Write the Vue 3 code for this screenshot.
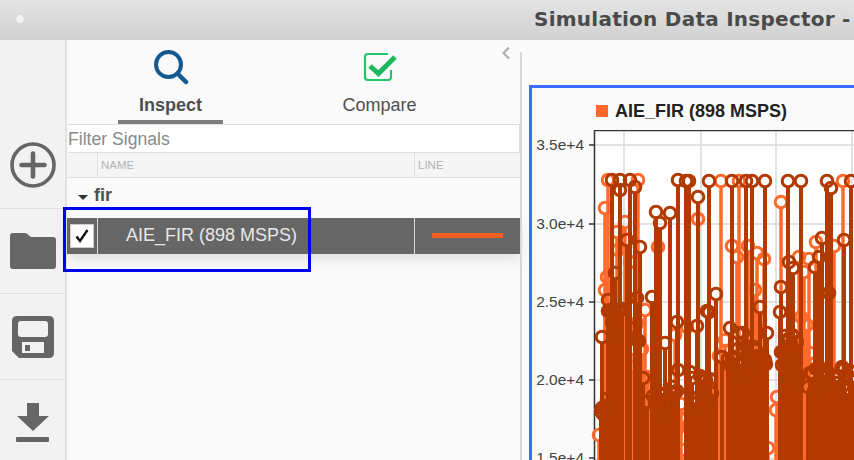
<template>
  <div class="window">
    <header class="titlebar">
      <span class="dot"></span>
      <span class="title">Simulation Data Inspector -</span>
    </header>
    <div class="body">
      <nav class="rail">
        <div class="rail-item first">
          <svg width="48" height="48" viewBox="0 0 48 48">
            <circle cx="24" cy="24" r="21" fill="none" stroke="#666" stroke-width="3.6" />
            <path d="M24 12.5v23M12.5 24h23" stroke="#666" stroke-width="4.6" stroke-linecap="round" />
          </svg>
        </div>
        <div class="rail-item second">
          <svg width="46" height="38" viewBox="0 0 46 38">
            <path d="M0 4q0-3 3-3h12q2 0 3 1.500l3 2.500h22q3 0 3 3v26q0 3-3 3H3q-3 0-3-3z" fill="#666" />
          </svg>
        </div>
        <div class="rail-item">
          <svg width="42" height="42" viewBox="0 0 42 42">
            <path fill-rule="evenodd" fill="#666" d="M5 0h32q5 0 5 5v32q0 5-5 5H7l-7-7V5q0-5 5-5zM9 5q-3 0-3 3v10q0 3 3 3h24q3 0 3-3V8q0-3-3-3zM10 26v11h22V26z" />
            <rect x="13" y="29" width="5" height="6" fill="#666" />
          </svg>
        </div>
        <div class="rail-item">
          <svg width="34" height="40" viewBox="0 0 34 40">
            <path d="M11 0h12v13h10L17 28 1 13h10z" fill="#666" />
            <rect x="0" y="34" width="33" height="5" rx="1" fill="#666" />
          </svg>
        </div>
      </nav>

      <section class="panel">
        <div class="tabs">
          <div class="tab active">
            <svg width="36" height="36" viewBox="0 0 36 36">
              <circle cx="15.500" cy="15.500" r="12.500" fill="none" stroke="#15598f" stroke-width="4" />
              <path d="M24.500 24.500l8.500 8.500" stroke="#15598f" stroke-width="4.500" stroke-linecap="round" />
            </svg>
            <span class="tab-label">Inspect</span>
          </div>
          <div class="tab">
            <svg width="36" height="36" viewBox="0 0 36 36">
              <path d="M26 5H6q-3 0-3 3v20q0 3 3 3h20q3 0 3-3v-7" fill="none" stroke="#22c567" stroke-width="2.200" />
              <path d="M8 17l8.500 7.500L33 8" fill="none" stroke="#1fb85f" stroke-width="5" />
            </svg>
            <span class="tab-label">Compare</span>
          </div>
          <svg class="collapse" width="10" height="14" viewBox="0 0 10 14">
            <path d="M8 1.500L2.500 7 8 12.500" fill="none" stroke="#aaa" stroke-width="2" />
          </svg>
        </div>
        <div class="filter">Filter Signals</div>
        <div class="head-row">
          <span class="cell-check"></span>
          <span class="cell-name">NAME</span>
          <span class="cell-line">LINE</span>
        </div>
        <div class="group"><span class="caret"></span>fir</div>
        <div class="signal-row">
          <span class="cell-check">
            <span class="checkbox">
              <svg width="16" height="16" viewBox="0 0 16 16">
                <path d="M2.500 8.500l3.500 4.500L13.500 2" fill="none" stroke="#111" stroke-width="2.400" />
              </svg>
            </span>
          </span>
          <span class="cell-name">AIE_FIR (898 MSPS)</span>
          <span class="cell-line"><i class="swatch"></i></span>
        </div>
        <div class="callout"></div>
      </section>

      <main class="view">
        <div class="chart-card">
          <div class="legend"><i class="legend-box"></i>AIE_FIR (898 MSPS)</div>
          <svg class="plot" width="325" height="330" viewBox="529 130 325 330">
            <rect x="594" y="130" width="260" height="330" fill="#fff" />
            <g stroke="#d9d9d9" stroke-width="1.500">
              <path v-for="y in gridY" :key="'h' + y" :d="`M594 ${y}H854`" />
              <path v-for="x in gridX" :key="'v' + x" :d="`M${x} 130V460`" />
            </g>
            <path d="M594.500 130V460M594 130.500H854" stroke="#333" stroke-width="1.500" fill="none" />
            <g v-for="t in ticks" :key="t.label">
              <path :d="`M589 ${t.y}H594`" stroke="#333" stroke-width="1.500" />
              <text x="584" :y="t.y + 5" text-anchor="end" class="tick">{{ t.label }}</text>
            </g>
            <g stroke="#ff6a2b" stroke-width="3.500" fill="none">
              <path v-for="(p, i) in lightStems" :key="'l' + i" :d="`M${p[0]} ${p[1] + 5}V460`" />
              <circle v-for="(p, i) in lightStems" :key="'lc' + i" :cx="p[0]" :cy="p[1]" r="5.800" stroke-width="3" />
            </g>
            <g stroke="#b23a00" stroke-width="4" fill="none">
              <path v-for="(p, i) in darkStems" :key="'d' + i" :d="`M${p[0]} ${p[1] + 5}V460`" />
              <circle v-for="(p, i) in darkStems" :key="'dc' + i" :cx="p[0]" :cy="p[1]" r="5.800" stroke-width="3" />
            </g>
          </svg>
        </div>
      </main>
    </div>
  </div>
</template>

<script setup>
const gridY = [145, 224, 302, 380, 459]
const gridX = [624, 701, 776, 852]
const ticks = [
  { label: '3.5e+4', y: 145 },
  { label: '3.0e+4', y: 224 },
  { label: '2.5e+4', y: 302 },
  { label: '2.0e+4', y: 380 },
  { label: '1.5e+4', y: 458 }
]

// read off the reference peaks
const lightPeaks = [
  [608, 180], [638, 180], [605, 208], [625, 222], [658, 247], [605, 290], [607, 277], [645, 310],
  [721, 181], [739, 181], [843, 181], [781, 202], [698, 219], [732, 246], [748, 246], [757, 253],
  [764, 259], [737, 257], [816, 242], [799, 257], [809, 259], [804, 272], [834, 246], [599, 435],
  [777, 397], [776, 410], [680, 418], [768, 448], [682, 450], [637, 323], [687, 327], [810, 353],
  [617, 232], [618, 250], [630, 262], [755, 290], [760, 320], [725, 340], [675, 335]
]
const darkPeaks = [
  [612, 180], [620, 180], [630, 180], [620, 190], [635, 187], [678, 180], [686, 181], [656, 212],
  [670, 213], [660, 223], [627, 240], [640, 247], [615, 273], [608, 300], [637, 298], [652, 297],
  [689, 181], [709, 181], [732, 181], [746, 181], [752, 181], [765, 181], [788, 181], [801, 181],
  [827, 181], [831, 188], [851, 181], [698, 197], [716, 294], [707, 311], [760, 307], [781, 287],
  [780, 312], [789, 262], [793, 268], [815, 267], [822, 238], [844, 240], [819, 257], [829, 293],
  [602, 337], [677, 322], [697, 326], [665, 343], [709, 312], [730, 328], [738, 333], [743, 333],
  [767, 333], [792, 335], [842, 367], [722, 357], [765, 360], [678, 370], [690, 372], [643, 378],
  [602, 408], [782, 365], [798, 380], [647, 402]
]

// dense part near the bottom, a fixed sequence so the picture stays the same
const darkBands = [
  [608, 623, 305], [601, 607, 395], [635, 640, 320], [653, 677, 385], [692, 712, 375],
  [728, 766, 345], [781, 797, 335], [808, 854, 365]
]
const lightBands = [
  [625, 634, 310], [642, 652, 330], [713, 727, 350], [798, 807, 310], [678, 682, 400]
]
let seed = 17
const next = () => {
  seed = (seed * 137 + 59) % 1009
  return seed / 1009
}
const fill = (bands, step, spread) => {
  const out = []
  bands.forEach(([from, to, top]) => {
    for (let x = from; x <= to; x += step) {
      out.push([x, top + Math.round(next() * spread)])
    }
  })
  return out
}
const lightStems = [...lightPeaks, ...fill(lightBands, 3, 60)]
const darkStems = [...darkPeaks, ...fill(darkBands, 2, 28)]
</script>

<style scoped>
.window {
  width: 854px;
  height: 460px;
  overflow: hidden;
  display: flex;
  flex-direction: column;
  background: #fafafa;
  font-family: "Liberation Sans", Arial, sans-serif;
}
.titlebar {
  flex: none;
  display: flex;
  align-items: center;
  padding: 0 0 2px 15px;
  height: 37px;
  border-bottom: 1px solid #d0d0d0;
  background: linear-gradient(#e4e4e4, #d2d2d2);
  white-space: nowrap;
}
.dot {
  flex: none;
  width: 10px;
  height: 10px;
  border-radius: 50%;
  background: #f2f2f2;
  border: 1px solid #d8d8d8;
  box-sizing: border-box;
}
.title {
  margin-left: 509px;
  font-family: "DejaVu Sans", sans-serif;
  font-weight: 700;
  font-size: 20px;
  letter-spacing: 0.25px;
  color: #4a4a4a;
}
.body {
  flex: 1;
  min-height: 0;
  display: flex;
}
.rail {
  flex: none;
  width: 65px;
  display: flex;
  flex-direction: column;
  background: #f2f2f2;
  border-right: 2px solid #e2e2e2;
}
.rail-item {
  flex: none;
  height: 85px;
  display: flex;
  align-items: center;
  justify-content: center;
  border-bottom: 1px solid #e0e0e0;
}
.rail-item.first {
  height: 169px;
  align-items: flex-end;
  padding-bottom: 19px;
  box-sizing: border-box;
}
.rail-item.second {
  height: 84px;
}
.panel {
  flex: none;
  width: 453px;
  position: relative;
  display: flex;
  flex-direction: column;
  padding-right: 2px;
  height: 420px;
}
.panel::after {
  content: "";
  position: absolute;
  right: 0;
  top: 12px;
  bottom: 0;
  width: 2px;
  background: #d8d8d8;
}
.tabs {
  flex: none;
  height: 84px;
  display: flex;
  position: relative;
  padding-left: 51px;
  box-sizing: border-box;
}
.tab {
  width: 105px;
  height: 84px;
  display: flex;
  flex-direction: column;
  align-items: center;
  padding-top: 9px;
  box-sizing: border-box;
  border-bottom: 4px solid transparent;
}
.tab + .tab {
  margin-left: 104px;
}
.tab.active {
  border-bottom-color: #7f7f7f;
}
.tab-label {
  margin-top: 10px;
  font-size: 18px;
  color: #4f4f4f;
}
.tab.active .tab-label {
  font-weight: 700;
}
.collapse {
  position: absolute;
  right: 9px;
  top: 6px;
}
.filter {
  flex: none;
  height: 29px;
  line-height: 28px;
  padding-left: 0;
  box-sizing: border-box;
  background: #fff;
  border: 1px solid #dedede;
  border-left: 0;
  margin-left: 1px;
  font-size: 17.600px;
  color: #8a8a8a;
}
.head-row {
  flex: none;
  height: 25px;
  display: flex;
  background: #f5f5f5;
  border-bottom: 1px solid #dedede;
  box-sizing: border-box;
  font-size: 11.500px;
  line-height: 24px;
  color: #b4b4b4;
}
.cell-check {
  flex: none;
  width: 31px;
  border-right: 1px solid #dedede;
  box-sizing: border-box;
  display: flex;
  align-items: center;
  justify-content: center;
}
.cell-name {
  flex: none;
  width: 317px;
  padding-left: 3px;
  box-sizing: border-box;
  border-right: 1px solid #dedede;
}
.cell-line {
  flex: 1;
  padding-left: 3px;
  box-sizing: border-box;
}
.group {
  flex: none;
  height: 40px;
  display: flex;
  align-items: center;
  padding-left: 11px;
  padding-bottom: 5px;
  box-sizing: border-box;
  font-size: 18px;
  font-weight: 700;
  color: #4f4f4f;
}
.caret {
  width: 0;
  height: 0;
  margin-right: 6px;
  margin-top: 3px;
  border-left: 5px solid transparent;
  border-right: 5px solid transparent;
  border-top: 5px solid #333;
}
.signal-row {
  flex: none;
  height: 36px;
  display: flex;
  background: #666;
  box-shadow: 0 6px 12px rgba(0, 0, 0, 0.1);
  font-size: 18px;
  line-height: 34px;
  color: #e8e8e8;
}
.signal-row .cell-check {
  border-right: 1px solid #d8d8d8;
}
.signal-row .cell-name {
  padding-left: 28px;
  border-right: 1px solid #d8d8d8;
}
.signal-row .cell-line {
  display: flex;
  align-items: center;
  padding-left: 17px;
  padding-bottom: 2px;
}
.checkbox {
  width: 24px;
  height: 24px;
  box-sizing: border-box;
  display: flex;
  align-items: center;
  justify-content: center;
  background: #fff;
  border: 1px solid #ccc;
}
.swatch {
  display: block;
  width: 71px;
  height: 5px;
  background: #f15f22;
}
.callout {
  position: absolute;
  left: -4px;
  top: 167px;
  width: 248px;
  height: 65px;
  box-sizing: border-box;
  border: 3px solid #0000f5;
}
.view {
  flex: 1;
  min-width: 0;
  padding: 45px 0 0 7px;
  overflow: hidden;
}
.chart-card {
  width: 340px;
  height: 400px;
  box-sizing: border-box;
  border: solid #3b6bff;
  border-width: 3px 0 0 3px;
  background: #fafafa;
}
.legend {
  height: 42px;
  display: flex;
  align-items: center;
  padding-left: 64px;
  padding-top: 4px;
  box-sizing: border-box;
  font-size: 18px;
  font-weight: 700;
  color: #222;
}
.legend-box {
  width: 12px;
  height: 12px;
  margin-right: 7px;
  background: #ff6a2b;
}
.plot {
  display: block;
  margin-left: -3px;
}
.tick {
  font-family: "Liberation Sans", Arial, sans-serif;
  font-size: 15.500px;
  fill: #444;
}
</style>
